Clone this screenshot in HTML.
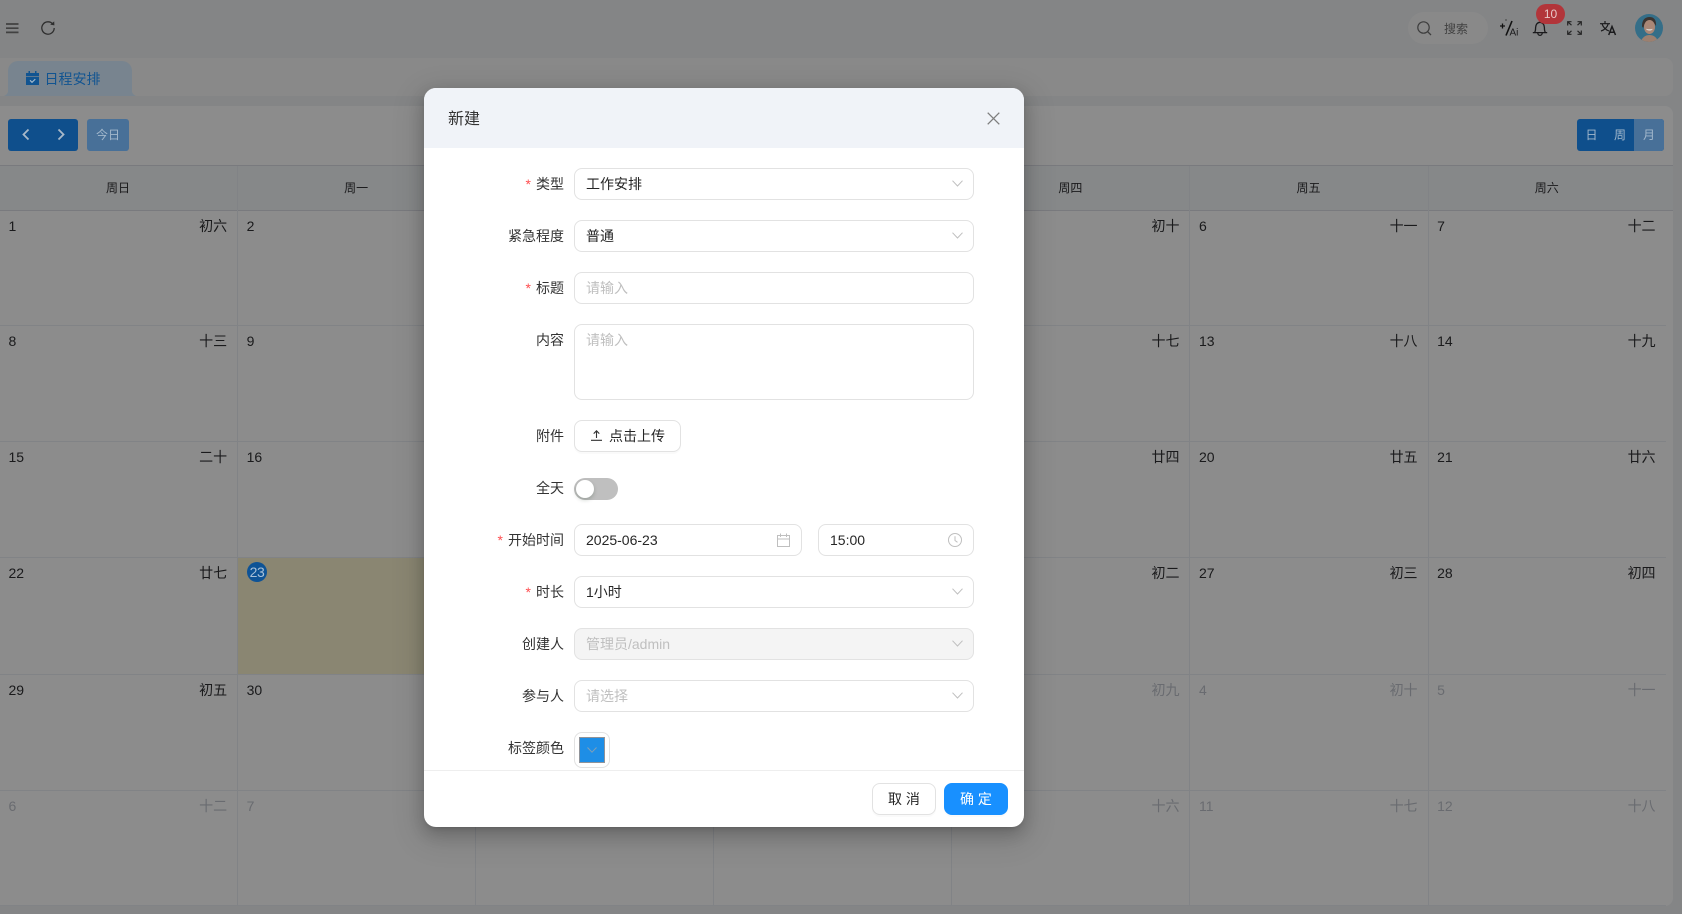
<!DOCTYPE html>
<html lang="zh-CN">
<head>
<meta charset="utf-8">
<title>日程安排</title>
<style>
*{box-sizing:border-box;margin:0;padding:0}
html,body{width:1682px;height:914px;overflow:hidden;background:#f0f2f5;font-family:"Liberation Sans","Noto Sans CJK SC",sans-serif;font-size:14px;color:#303133}
.abs{position:absolute}
svg{display:block;overflow:visible}
#bar{left:0;top:58px;width:1673px;height:38px;background:#fafafa;border-radius:0 8px 8px 0}
#tab{left:8px;top:61px;width:124px;height:35px;background:#78848f;border-radius:10px 10px 0 0;color:#115491;line-height:37px;padding-left:36.5px}
#tab:before,#tab:after{content:"";position:absolute;bottom:0;width:6px;height:6px}
#tab:before{left:-6px;background:radial-gradient(circle at 0 0,transparent 6px,#78848f 6.5px)}
#tab:after{right:-6px;background:radial-gradient(circle at 100% 0,transparent 6px,#78848f 6.5px)}
#panel{left:0;top:106px;width:1673px;height:800px;background:#fff;border-radius:0 8px 8px 0}
.bl{background:#0f4f8c;color:#a3b8cc;border-radius:3px;font-size:12px;text-align:center;line-height:32px;height:32px;top:119px}
.wk{left:0;top:165px;width:1673px;height:46px;display:grid;grid-template-columns:repeat(6,238.1px) 1fr;background:#f5f7fa;border-top:1px solid #dcdfe6;border-bottom:1px solid #dcdfe6}
.wk div{font-size:12px;line-height:45px;text-align:center;border-right:1px solid #ebeef5;padding-right:1px}
.wk div:last-child{border-right:0;padding-right:8px}
#grid{left:0;top:211px;width:1665.6px;display:grid;grid-template-columns:repeat(6,238.1px) 237px;grid-template-rows:115px 116px 116px 117px 116px 115px}
#grid div{position:relative;border-right:1px solid #ebeef5;border-bottom:1px solid #ebeef5;padding:5px 10px 0 8.5px;line-height:20px;display:flex;justify-content:space-between;align-items:flex-start}
#grid div:nth-child(7n){border-right:0}
#grid div.g{color:#c0c4cc}
#grid div.t{background:#fbf5d0}
#mask{left:0;top:0;width:1682px;height:914px;background:rgba(0,0,0,.45)}
#modal{left:424px;top:88px;width:600px;height:739px;background:#fff;border-radius:12px;box-shadow:0 6px 16px rgba(0,0,0,.2),0 3px 6px -4px rgba(0,0,0,.25),0 9px 28px 8px rgba(0,0,0,.1);overflow:hidden}
#mh{left:0;top:0;width:600px;height:60px;background:#f0f3f8;font-size:16px;line-height:63px;padding-left:24px;color:#333}
#mf{left:0;top:682px;width:600px;height:57px;border-top:1px solid #eee}
.lb{position:absolute;left:0;width:140px;text-align:right;line-height:32px;color:#333;white-space:nowrap}
.lb i{font-style:normal;color:#ff4d4f;margin-right:5px;font-size:14px}
.in{position:absolute;left:150px;width:400px;height:32px;border:1px solid #e2e2e2;border-radius:8px;line-height:30px;padding-left:11px;color:#262626;background:#fff}
.ph{color:#bfbfbf}
.dis{background:#f4f4f4;color:#bfbfbf}
.ch{position:absolute;right:10.5px;top:11px}
.btn{position:absolute;top:695px;width:64px;height:32px;border-radius:8px;text-align:center;line-height:30px;border:1px solid #e2e2e2;background:#fff;color:#262626;box-shadow:0 2px 0 rgba(0,0,0,.02)}
</style>
</head>
<body>

<!-- top header -->
<svg class="abs" style="left:6px;top:23px" width="13" height="11" viewBox="0 0 13 11"><path d="M0 1h12.500M0 5.200h12.500M0 9.400h12.500" stroke="#777" stroke-width="1.700" fill="none"/></svg>
<svg class="abs" style="left:41px;top:21px" width="14" height="14" viewBox="0 0 14 14"><path d="M11.900 3.200A6.200 6.200 0 1 0 13.200 7" stroke="#555" stroke-width="1.300" fill="none"/><path d="M9.200 3.600L13.400 4.400 13.200 0.400z" fill="#555"/></svg>

<div class="abs" style="left:1408px;top:12px;width:80px;height:32px;border-radius:16px;background:#fafafa"></div>
<svg class="abs" style="left:1417px;top:21px" width="15" height="15" viewBox="0 0 15 15"><circle cx="6.500" cy="6.500" r="5.700" stroke="#707070" stroke-width="1.200" fill="none"/><path d="M10.800 10.800L14 14" stroke="#707070" stroke-width="1.300"/></svg>
<div class="abs" style="left:1444px;top:19px;font-size:12px;line-height:20px;color:#777">搜索</div>

<svg class="abs" style="left:1499px;top:19px" width="20" height="18" viewBox="0 0 20 18"><path d="M3.500 4.500v5M1 7h5" stroke="#202020" stroke-width="1.300"/><path d="M7 16.500L13 2" stroke="#202020" stroke-width="1.600"/><circle cx="7" cy="1" r=".6" fill="#202020"/><text x="10.500" y="16.500" font-size="10" fill="#303133" font-family="Liberation Sans">Ai</text></svg>

<svg class="abs" style="left:1532px;top:20px" width="16" height="17" viewBox="0 0 16 17"><path d="M0.800 12.600h14.400M2.600 12.500c1-1.400 1-3 1-5C3.600 4.600 5.500 2.300 8 2.300s4.400 2.300 4.400 5.200c0 2 0 3.600 1 5" stroke="#303133" stroke-width="1.300" fill="none"/><path d="M5.800 13a2.200 2.400 0 0 0 4.400 0" stroke="#303133" stroke-width="1.300" fill="none"/></svg>

<svg class="abs" style="left:1567px;top:21px" width="15" height="14" viewBox="0 0 15 14" fill="none" stroke="#444" stroke-width="1.200"><path d="M0.700 4.500V0.700h3.800M14.300 4.500V0.700h-3.800M0.700 9.500v3.800h3.800M14.300 9.500v3.800h-3.800M1 1l3.500 3.200M14 1l-3.500 3.200M1 13l3.500-3.200M14 13l-3.500-3.200"/></svg>

<svg class="abs" style="left:1600px;top:21px" width="16" height="14" viewBox="0 0 16 14" fill="none" stroke="#303133" stroke-width="1.200"><path d="M0 2.700h10M5 0v2.700M2 2.700c1.200 3.800 3.500 6 7 7.300M8.300 2.700C7.200 6.300 4.800 8.800 1 10"/><path d="M8.700 14L12 5.500 15.500 14M10 11.300h4.200" stroke-width="1.500"/></svg>

<!-- tabs -->
<div class="abs" id="bar"></div>

<!-- calendar panel -->
<div class="abs" id="panel"></div>

<div class="abs wk">
  <div>周日</div><div>周一</div><div>周二</div><div>周三</div><div>周四</div><div>周五</div><div>周六</div>
</div>

<div class="abs" id="grid">
  <div><span>1</span><span>初六</span></div><div><span>2</span><span>初七</span></div><div><span>3</span><span>初八</span></div><div><span>4</span><span>初九</span></div><div><span>5</span><span>初十</span></div><div><span>6</span><span>十一</span></div><div><span>7</span><span>十二</span></div>
  <div><span>8</span><span>十三</span></div><div><span>9</span><span>十四</span></div><div><span>10</span><span>十五</span></div><div><span>11</span><span>十六</span></div><div><span>12</span><span>十七</span></div><div><span>13</span><span>十八</span></div><div><span>14</span><span>十九</span></div>
  <div><span>15</span><span>二十</span></div><div><span>16</span><span>廿一</span></div><div><span>17</span><span>廿二</span></div><div><span>18</span><span>廿三</span></div><div><span>19</span><span>廿四</span></div><div><span>20</span><span>廿五</span></div><div><span>21</span><span>廿六</span></div>
  <div><span>22</span><span>廿七</span></div><div class="t"><span></span><span>廿八</span></div><div><span>24</span><span>廿九</span></div><div><span>25</span><span>初一</span></div><div><span>26</span><span>初二</span></div><div><span>27</span><span>初三</span></div><div><span>28</span><span>初四</span></div>
  <div><span>29</span><span>初五</span></div><div><span>30</span><span>初六</span></div><div class="g"><span>1</span><span>初七</span></div><div class="g"><span>2</span><span>初八</span></div><div class="g"><span>3</span><span>初九</span></div><div class="g"><span>4</span><span>初十</span></div><div class="g"><span>5</span><span>十一</span></div>
  <div class="g"><span>6</span><span>十二</span></div><div class="g"><span>7</span><span>十三</span></div><div class="g"><span>8</span><span>十四</span></div><div class="g"><span>9</span><span>十五</span></div><div class="g"><span>10</span><span>十六</span></div><div class="g"><span>11</span><span>十七</span></div><div class="g"><span>12</span><span>十八</span></div>
</div>

<div class="abs" id="mask"></div>

<!-- saturated elements painted in their dimmed colours, above the mask -->
<div class="abs" id="tab">日程安排</div>
<svg class="abs" style="left:25.500px;top:71px" width="13" height="14" viewBox="0 0 13 14"><path d="M0 2h2.500V0h1.500v2h5V0h1.500v2H13v3H0zM0 5.800h13V14H0z" fill="#115491"/><path d="M4 9.300l2 2 3.300-3.200" stroke="#a8bccd" stroke-width="1.100" fill="none"/></svg>

<div class="abs bl" style="left:8px;width:70px"></div>
<svg class="abs" style="left:22px;top:129px" width="8" height="11" viewBox="0 0 8 11" fill="none" stroke="#a9b9c9" stroke-width="1.800"><path d="M6.500 .5L1.500 5.500l5 5"/></svg>
<svg class="abs" style="left:57px;top:129px" width="8" height="11" viewBox="0 0 8 11" fill="none" stroke="#a9b9c9" stroke-width="1.800"><path d="M1.500 .5l5 5-5 5"/></svg>
<div class="abs bl" style="left:87px;width:42px;background:#487098">今日</div>
<div class="abs bl" style="left:1577px;width:87px;overflow:hidden">
  <span class="abs" style="left:0;top:0;width:29px">日</span>
  <span class="abs" style="left:29px;top:0;width:28px">周</span>
  <span class="abs" style="left:57px;top:0;width:30px;background:#487098">月</span>
</div>
<div class="abs" style="left:247px;top:562px;width:20px;height:20px;border-radius:50%;background:#0e5396;color:#a8c0d8;text-align:center;line-height:20px;font-size:14px;letter-spacing:-.4px">23</div>

<div class="abs" style="left:1536px;top:4px;width:29px;height:20px;border-radius:10px;background:#b2353a;color:#e8c8c8;font-size:12px;line-height:20px;text-align:center">10</div>
<svg class="abs" style="left:1635px;top:14px" width="28" height="28" viewBox="0 0 28 28">
  <defs><clipPath id="av"><circle cx="14" cy="14" r="14"/></clipPath></defs>
  <g clip-path="url(#av)">
    <rect width="28" height="28" fill="#346e88"/>
    <path d="M7 12C7 6 10 3 14.500 3S21.500 6 21 12c-2-3-3-5-6-5.500C12 7 9.500 9 8.500 13.500 8 14 7 13 7 12z" fill="#3b3430"/>
    <ellipse cx="14.500" cy="13" rx="5.500" ry="7" fill="#a98776"/>
    <path d="M10.800 14.800c1.500 2.500 5.700 2.500 7.200 0-1.200.5-5.800.5-7.200 0z" fill="#d8d4d0"/>
    <path d="M6 28c1-5 5-7 8.500-7s7.500 2 8.500 7z" fill="#9c8070"/>
  </g>
</svg>

<!-- modal -->
<div class="abs" id="modal">
  <div class="abs" id="mh">新建</div>
  <svg class="abs" style="left:563px;top:24px" width="13" height="13" viewBox="0 0 13 13"><path d="M.7.7l11.600 11.600M12.300.7L.7 12.300" stroke="#7f7f7f" stroke-width="1.300"/></svg>

  <div class="lb" style="top:80px"><i>*</i>类型</div>
  <div class="in" style="top:80px">工作安排<svg class="ch" width="11" height="7" viewBox="0 0 11 7"><path d="M.5.7l5 5.300 5-5.300" stroke="#bfbfbf" fill="none"/></svg></div>

  <div class="lb" style="top:132px">紧急程度</div>
  <div class="in" style="top:132px">普通<svg class="ch" width="11" height="7" viewBox="0 0 11 7"><path d="M.5.7l5 5.300 5-5.300" stroke="#bfbfbf" fill="none"/></svg></div>

  <div class="lb" style="top:184px"><i>*</i>标题</div>
  <div class="in ph" style="top:184px">请输入</div>

  <div class="lb" style="top:236px">内容</div>
  <div class="in ph" style="top:236px;height:76px">请输入</div>

  <div class="lb" style="top:332px">附件</div>
  <div class="in" style="top:332px;width:107px;padding-left:0;box-shadow:0 2px 0 rgba(0,0,0,.02)">
    <svg class="abs" style="left:16px;top:9px" width="11" height="11" viewBox="0 0 11 11"><path d="M5.500 8V1M2.700 3.600L5.500 .8l2.800 2.800M0 10.300h11" stroke="#333" stroke-width="1.100" fill="none"/></svg>
    <span class="abs" style="left:34px;top:0;white-space:nowrap">点击上传</span>
  </div>

  <div class="lb" style="top:384px">全天</div>
  <div class="abs" style="left:150px;top:390px;width:44px;height:22px;border-radius:11px;background:#bfbfbf"></div>
  <div class="abs" style="left:152px;top:392px;width:18px;height:18px;border-radius:50%;background:#fff;box-shadow:0 2px 4px rgba(0,35,11,.2)"></div>

  <div class="lb" style="top:436px"><i>*</i>开始时间</div>
  <div class="in" style="top:436px;width:228px">2025-06-23
    <svg class="abs" style="left:202px;top:8px" width="13" height="14" viewBox="0 0 13 14" fill="none" stroke="#bfbfbf"><path d="M.5 2.500h12v11H.5zM.5 6h12M3.500 .5v3.500M9.500 .5v3.500"/></svg>
  </div>
  <div class="in" style="top:436px;left:394px;width:156px">15:00
    <svg class="abs" style="left:129px;top:8px" width="14" height="14" viewBox="0 0 14 14" fill="none" stroke="#bfbfbf"><circle cx="7" cy="7" r="6.500"/><path d="M7 3.200V7.500l2.500 1.800"/></svg>
  </div>

  <div class="lb" style="top:488px"><i>*</i>时长</div>
  <div class="in" style="top:488px">1小时<svg class="ch" width="11" height="7" viewBox="0 0 11 7"><path d="M.5.7l5 5.300 5-5.300" stroke="#bfbfbf" fill="none"/></svg></div>

  <div class="lb" style="top:540px">创建人</div>
  <div class="in dis" style="top:540px">管理员/admin<svg class="ch" width="11" height="7" viewBox="0 0 11 7"><path d="M.5.7l5 5.300 5-5.300" stroke="#bfbfbf" fill="none"/></svg></div>

  <div class="lb" style="top:592px">参与人</div>
  <div class="in ph" style="top:592px">请选择<svg class="ch" width="11" height="7" viewBox="0 0 11 7"><path d="M.5.7l5 5.300 5-5.300" stroke="#bfbfbf" fill="none"/></svg></div>

  <div class="lb" style="top:644px">标签颜色</div>
  <div class="abs" style="left:150px;top:644px;width:36px;height:36px;border:1px solid #e2e2e2;border-radius:8px"></div>
  <div class="abs" style="left:155px;top:649px;width:26px;height:26px;background:#1e8ee6;border:1px solid #909399"></div>
  <svg class="abs" style="left:163px;top:659px" width="10" height="6" viewBox="0 0 10 6"><path d="M.5.500l4.500 4.700L9.500.500" stroke="#7f9fb8" fill="none"/></svg>

  <div class="abs" id="mf"></div>
  <div class="btn" style="left:448px;width:64px">取 消</div>
  <div class="btn" style="left:520px;background:#1890ff;border-color:#1890ff;color:#fff">确 定</div>
</div>
</body>
</html>
